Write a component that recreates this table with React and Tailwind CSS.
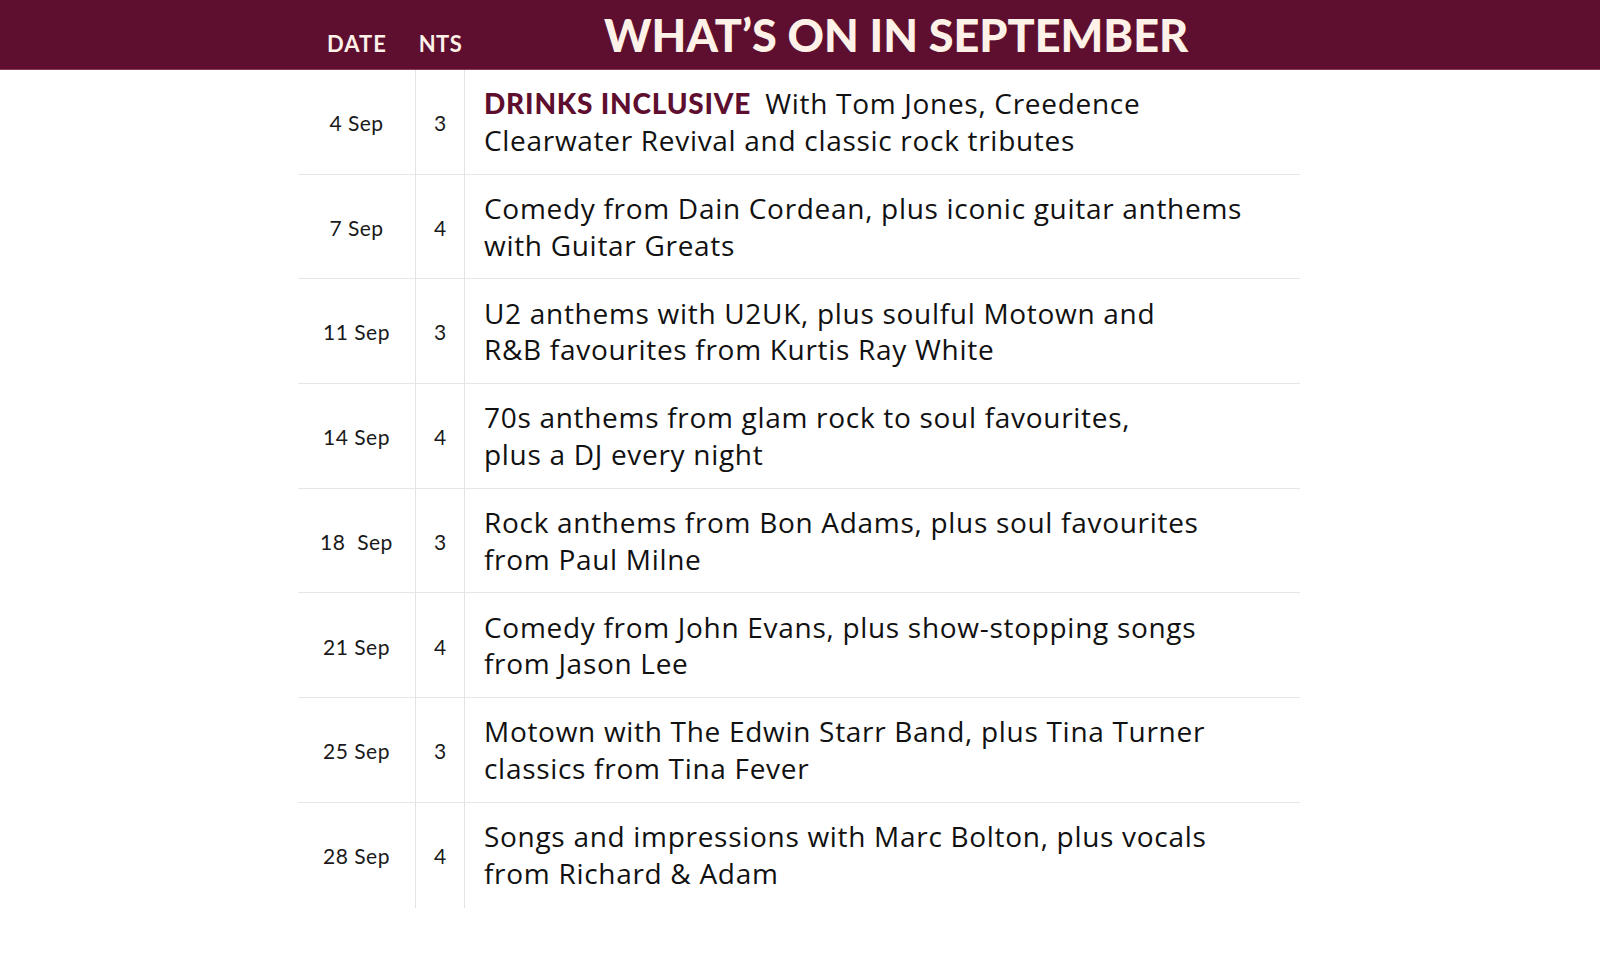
import React from "react";

const rows = [
  { date: "4 Sep", n: "3", bold: "DRINKS INCLUSIVE", l1: "With Tom Jones, Creedence", l2: "Clearwater Revival and classic rock tributes" },
  { date: "7 Sep", n: "4", l1: "Comedy from Dain Cordean, plus iconic guitar anthems", l2: "with Guitar Greats" },
  { date: "11 Sep", n: "3", l1: "U2 anthems with U2UK, plus soulful Motown and", l2: "R&B favourites from Kurtis Ray White" },
  { date: "14 Sep", n: "4", l1: "70s anthems from glam rock to soul favourites,", l2: "plus a DJ every night" },
  { date: "18\u00a0 Sep", n: "3", l1: "Rock anthems from Bon Adams, plus soul favourites", l2: "from Paul Milne" },
  { date: "21 Sep", n: "4", l1: "Comedy from John Evans, plus show-stopping songs", l2: "from Jason Lee" },
  { date: "25 Sep", n: "3", l1: "Motown with The Edwin Starr Band, plus Tina Turner", l2: "classics from Tina Fever" },
  { date: "28 Sep", n: "4", l1: "Songs and impressions with Marc Bolton, plus vocals", l2: "from Richard & Adam" },
];

export default function App() {
  return (
    <div className="w-[1600px] h-[967px] bg-white overflow-hidden" style={{ fontFamily: "Lato, 'Open Sans', sans-serif" }}>
      <div className="h-[70px] bg-[#5e0f2f] border-b border-[#8a3b58] flex items-end pb-[14px]">
        <div className="w-[298px]" />
        <div className="w-[118px] text-center text-[22px] font-bold text-[#fdf1e8] leading-none tracking-[1px]">DATE</div>
        <div className="w-[49px] text-center text-[22px] font-bold text-[#fdf1e8] leading-none tracking-[0.5px]">NTS</div>
        <div className="pl-[139px] text-[45px] font-extrabold text-[#fdf1e8] leading-none mb-[-3px]" style={{ fontWeight: 900 }}>WHAT’S ON IN SEPTEMBER</div>
      </div>
      <div className="ml-[298px] w-[1002px]">
        {rows.map((r, i) => (
          <div key={i} className={`flex h-[104.7px] ${i < rows.length - 1 ? "border-b border-[#e6e6e6]" : ""}`}>
            <div className="w-[118px] border-r border-[#e3e3e3] flex items-center justify-center text-[21px] text-[#1a1a1a] pt-[2px] tracking-[0.5px]">{r.date}</div>
            <div className="w-[49px] border-r border-[#e3e3e3] flex items-center justify-center text-[21px] text-[#1a1a1a] pt-[2px]">{r.n}</div>
            <div className="flex-1 flex flex-col justify-center pl-[19px] text-[28px] leading-[36.7px] text-[#111] tracking-[0.7px]" style={{ fontFamily: "'Open Sans', Lato, sans-serif" }}>
              <div className="whitespace-nowrap">
                {r.bold && <span className="font-bold text-[#5e0f2f] mr-[14px] tracking-[0.8px]" style={{ fontFamily: "Lato, sans-serif", fontWeight: 900 }}>{r.bold}</span>}
                {r.l1}
              </div>
              <div className="whitespace-nowrap">{r.l2}</div>
            </div>
          </div>
        ))}
      </div>
    </div>
  );
}
